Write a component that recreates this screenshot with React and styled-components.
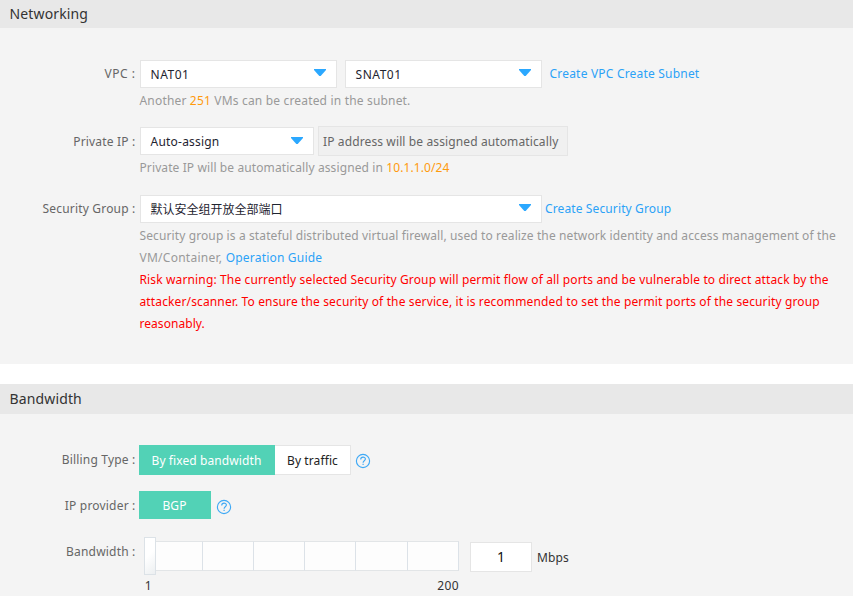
import React from "react";
import styled, { createGlobalStyle, css } from "styled-components";

const GlobalStyle = createGlobalStyle`
  * { box-sizing: border-box; }
  body {
    margin: 0;
    background: #fff;
    color: #666;
    font: 12px/22px "Noto Sans", "Noto Sans CJK SC", sans-serif;
    letter-spacing: 0.12px;
    overflow: hidden;
  }
`;

const Page = styled.main`
  display: flex;
  flex-direction: column;
  gap: 20px;
  width: 853px;
  height: 596px;
  overflow: hidden;
`;

const Panel = styled.section`
  flex: none;
  height: ${(p) => p.$height}px;
  background: #f4f4f4;
`;

const PanelTitle = styled.h2`
  margin: 0;
  height: ${(p) => p.$height}px;
  padding-left: 9.6px;
  background: #e8e8e8;
  color: #333;
  font-size: 14px;
  font-weight: 400;
  line-height: ${(p) => p.$height - 1}px;
`;

const Form = styled.div`
  display: flex;
  flex-direction: column;
  padding-top: ${(p) => p.$top}px;
`;

const Field = styled.div`
  display: grid;
  grid-template-columns: 135.5px 1fr;
  column-gap: ${(p) => p.$gap ?? 4.5}px;
  height: ${(p) => p.$height}px;
`;

const Label = styled.span`
  text-align: right;
  white-space: nowrap;
  line-height: 28px;
  padding-top: ${(p) => p.$drop ?? 0}px;
  letter-spacing: ${(p) => p.$spacing ?? 0.19}px;
`;

const Controls = styled.div`
  display: flex;
  align-items: ${(p) => p.$align ?? "center"};
  height: ${(p) => p.$height ?? 28}px;
`;

const SelectBox = styled.div`
  display: flex;
  justify-content: space-between;
  flex: none;
  width: ${(p) => p.$width}px;
  height: 28px;
  margin-right: ${(p) => p.$after}px;
  padding: 0 10px 0 9.6px;
  border: 1px solid #e5e5e5;
  background: #fff;
  color: #1e2430;
  line-height: ${(p) => p.$line ?? 27}px;
  letter-spacing: ${(p) => p.$spacing}px;
`;

const Arrow = styled.svg`
  width: 12px;
  height: 7px;
  margin-top: ${(p) => p.$top}px;
  fill: #2ba8ff;
`;

const Link = styled.a`
  color: #2ba2f7;
  text-decoration: none;
  white-space: nowrap;
  letter-spacing: ${(p) => p.$spacing ?? 0.12}px;
`;

const GroupLink = styled(Link)`
  line-height: 28px;
`;

const ReadOnly = styled.div`
  flex: none;
  width: 250px;
  height: 30px;
  padding-left: 4px;
  border: 1px solid #e5e5e5;
  background: #f0f0f0;
  line-height: 29px;
  white-space: nowrap;
`;

const Hint = styled.div`
  margin-left: -0.5px;
  padding-top: ${(p) => p.$drop ?? 0}px;
  color: #999;
  white-space: nowrap;
  letter-spacing: ${(p) => p.$spacing}px;
`;

const Amount = styled.span`
  color: #ff9a0d;
`;

const Warning = styled(Hint)`
  color: #f00;
`;

const Option = styled.button`
  flex: none;
  width: ${(p) => p.$width}px;
  height: ${(p) => p.$height}px;
  padding: 2px 0 0;
  border: 1px solid #e5e5e5;
  border-left: 0;
  background: #fff;
  color: #222;
  font: inherit;
  letter-spacing: 0.1px;
  ${(p) =>
    p.$active &&
    css`
      border-color: #52d2b6;
      background: #52d2b6;
      color: #fff;
    `}
`;

const HelpIcon = styled.svg`
  flex: none;
  width: 16px;
  height: 16px;
  margin: ${(p) => p.$top}px 0 0 ${(p) => p.$before}px;
  fill: none;
  stroke: #3fa9f5;
  stroke-width: 1.15;
`;

const SliderColumn = styled.div`
  width: 315px;
  flex: none;
  margin: 0 11px 0 5px;
`;

const Track = styled.div`
  display: grid;
  grid-template-columns: 12px 47px 51px 51px 51px 52px 51px;
  align-items: center;
  height: 37px;
`;

const Handle = styled.div`
  width: 12px;
  height: 38px;
  border: 1px solid #dce2e7;
  background: linear-gradient(135deg, #fff 45%, #eceff1);
`;

const Segment = styled.div`
  height: 30px;
  margin-top: -1px;
  border: solid #e2e5e7;
  border-width: 1px 0;
  border-right: 1px solid #dce2e8;
  background: #fdfdfd;
`;

const Scale = styled.div`
  display: flex;
  justify-content: space-between;
  color: #333;
  line-height: 20px;
  padding: 2px 0 0 0.7px;
  letter-spacing: 0.4px;
`;

const RateInput = styled.input`
  width: 62px;
  height: 30px;
  margin: 5px 5px 0 0;
  padding: 0 0 2px;
  border: 1px solid #e5e5e5;
  outline: 0;
  background: #fff;
  color: #111;
  font: 14px "Noto Sans", sans-serif;
  text-align: center;
`;

const Unit = styled.span`
  margin-top: 10px;
  color: #333;
`;

function Select({ children, width, after = 0, spacing = 0.2, line, arrowTop = 8 }) {
  return (
    <SelectBox $width={width} $after={after} $spacing={spacing} $line={line}>
      {children}
      <Arrow viewBox="0 0 12 7" $top={arrowTop}>
        <path d="M0 0h12v1L6.7 7H5.3L0 1z" />
      </Arrow>
    </SelectBox>
  );
}

function Help({ before, top = 2 }) {
  return (
    <HelpIcon viewBox="0 0 16 16" $before={before} $top={top}>
      <circle cx="8" cy="8" r="6.6" />
      <path d="M5.7 6.4C5.7 3.4 10.4 3.4 10.4 6.1C10.4 7.8 8.1 7.8 8.1 9.7M8.1 10.8V12.1" />
    </HelpIcon>
  );
}

export default function App() {
  return (
    <>
      <GlobalStyle />
      <Page>
        <Panel $height={364}>
          <PanelTitle $height={28}>Networking</PanelTitle>
          <Form $top={32}>
            <Field $height={67}>
              <Label $spacing={0.5}>VPC :</Label>
              <div>
                <Controls>
                  <Select width={197} after={8} spacing={0.5}>NAT01</Select>
                  <Select width={197} after={7.5} spacing={0.5}>SNAT01</Select>
                  <Link $spacing={0.2}>Create VPC Create Subnet</Link>
                </Controls>
                <Hint $drop={2} $spacing={0.177}>
                  Another <Amount>251</Amount> VMs can be created in the subnet.
                </Hint>
              </div>
            </Field>
            <Field $height={68}>
              <Label $drop={1}>Private IP :</Label>
              <div>
                <Controls>
                  <Select width={174} after={4} arrowTop={9}>Auto-assign</Select>
                  <ReadOnly>IP address will be assigned automatically</ReadOnly>
                </Controls>
                <Hint $drop={2} $spacing={0.105}>
                  Private IP will be automatically assigned in <Amount>10.1.1.0/24</Amount>
                </Hint>
              </div>
            </Field>
            <Field $height={140}>
              <Label>Security Group :</Label>
              <div>
                <Controls $height={30} $align="flex-start">
                  <Select width={402} after={3} spacing={0} line={28}>默认安全组开放全部端口</Select>
                  <GroupLink>Create Security Group</GroupLink>
                </Controls>
                <Hint $spacing={0.112}>
                  Security group is a stateful distributed virtual firewall, used to realize the network identity and access management of the
                </Hint>
                <Hint $spacing={0.26}>
                  VM/Container, <Link $spacing={0.2}>Operation Guide</Link>
                </Hint>
                <Warning $spacing={0.137}>
                  Risk warning: The currently selected Security Group will permit flow of all ports and be vulnerable to direct attack by the
                </Warning>
                <Warning $spacing={0.132}>
                  attacker/scanner. To ensure the security of the service, it is recommended to set the permit ports of the security group
                </Warning>
                <Warning $spacing={0.05}>reasonably.</Warning>
              </div>
            </Field>
          </Form>
        </Panel>
        <Panel $height={212}>
          <PanelTitle $height={30}>Bandwidth</PanelTitle>
          <Form $top={31}>
            <Field $height={46} $gap={3.5}>
              <Label $drop={1}>Billing Type :</Label>
              <Controls $height={30}>
                <Option $width={136} $height={30} $active>By fixed bandwidth</Option>
                <Option $width={76} $height={30}>By traffic</Option>
                <Help before={4} />
              </Controls>
            </Field>
            <Field $height={46} $gap={3.5}>
              <Label $drop={1}>IP provider :</Label>
              <Controls>
                <Option $width={72} $height={28} $active>BGP</Option>
                <Help before={5} top={4} />
              </Controls>
            </Field>
            <Field $height={59} $gap={3.5}>
              <Label $drop={1}>Bandwidth :</Label>
              <Controls $height={59} $align="flex-start">
                <SliderColumn>
                  <Track>
                    <Handle />
                    <Segment />
                    <Segment />
                    <Segment />
                    <Segment />
                    <Segment />
                    <Segment />
                  </Track>
                  <Scale>
                    <span>1</span>
                    <span>200</span>
                  </Scale>
                </SliderColumn>
                <RateInput defaultValue="1" />
                <Unit>Mbps</Unit>
              </Controls>
            </Field>
          </Form>
        </Panel>
      </Page>
    </>
  );
}
